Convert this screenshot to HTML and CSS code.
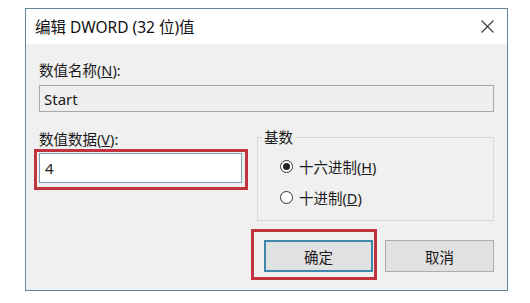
FILE: index.html
```html
<!DOCTYPE html>
<html lang="zh-CN">
<head>
<meta charset="utf-8">
<title>编辑 DWORD (32 位)值</title>
<link rel="stylesheet" href="styles.css">
</head>
<body>
<div class="page">
  <div class="dialog">
    <div class="titlebar">
      <span class="title">编辑 DWORD (32 位)值</span>
      <svg class="close" width="13" height="13" viewBox="0 0 13 13" aria-label="关闭">
        <path d="M0.5 0.5 L12.5 12.5 M12.5 0.5 L0.5 12.5" stroke="#3a3a3a" stroke-width="1.1" fill="none"/>
      </svg>
    </div>
    <div class="content">
      <div class="lbl lbl-name">数值名称(<u>N</u>):</div>
      <div class="field field-readonly">Start</div>
      <div class="row">
        <div class="col-left">
          <div class="lbl">数值数据(<u>V</u>):</div>
          <div class="mark mark-input">
            <div class="field field-edit">4</div>
          </div>
        </div>
        <fieldset class="group">
          <legend class="legend">基数</legend>
          <div class="radio">
            <span class="radio-circle checked"></span>
            <span class="radio-text">十六进制(<u>H</u>)</span>
          </div>
          <div class="radio">
            <span class="radio-circle"></span>
            <span class="radio-text">十进制(<u>D</u>)</span>
          </div>
        </fieldset>
      </div>
      <div class="buttons">
        <div class="mark mark-btn">
          <div class="btn btn-default">确定</div>
        </div>
        <div class="btn btn-cancel">取消</div>
      </div>
    </div>
  </div>
</div>
</body>
</html>
```

FILE: styles.css
```css
html, body {
  margin: 0;
  padding: 0;
  background: #ffffff;
}

body {
  font-family: "Noto Sans", "Noto Sans CJK SC", sans-serif;
  font-size: 14.5px;
  color: #1a1a1a;
}

.page {
  padding: 8px 0 0 25px;
}

.dialog {
  box-sizing: border-box;
  width: 483px;
  height: 283px;
  border: 1px solid #5f8798;
  background: #f0f0f0;
  display: flex;
  flex-direction: column;
}

.titlebar {
  height: 35px;
  flex: none;
  background: #ffffff;
  display: flex;
  align-items: center;
  justify-content: space-between;
  padding: 0 13px 0 9px;
}

.title {
  font-size: 15.5px;
  color: #111;
}

.close {
  display: block;
}

.content {
  flex: 1;
  padding: 16px 13px 0 13px;
  display: flex;
  flex-direction: column;
}

.lbl {
  line-height: 20px;
  height: 20px;
  white-space: nowrap;
}

.lbl-name {
  margin-bottom: 5px;
}

.field {
  box-sizing: border-box;
  display: flex;
  align-items: center;
  padding-left: 4px;
  font-size: 15px;
  white-space: nowrap;
}

.field-readonly {
  height: 27px;
  border: 1px solid #a8a8a8;
  background: #efefef;
  margin-bottom: 17px;
}

.field-edit {
  height: 30px;
  width: 203px;
  border: 1px solid #7d9db3;
  background: #ffffff;
  padding-left: 5px;
}

.row {
  display: flex;
  align-items: flex-start;
}

.col-left {
  width: 214px;
  flex: none;
}

.mark {
  border: 3px solid #c1343f;
}

.mark-input {
  box-sizing: border-box;
  width: 214px;
  margin-left: -5px;
  padding: 1px 3px 4px 2px;
}

.group {
  box-sizing: border-box;
  flex: 1;
  margin: -1px 0 0 4px;
  padding: 10px 0 0 22px;
  height: 93px;
  border: 1px solid #d8d8d8;
  border-radius: 0;
}

.legend {
  padding: 0 2px;
  margin-left: -18px;
  line-height: 18px;
}

.radio {
  display: flex;
  align-items: center;
  height: 20px;
  margin-bottom: 11px;
  white-space: nowrap;
}

.radio-circle {
  box-sizing: border-box;
  width: 13px;
  height: 13px;
  border: 1px solid #333333;
  border-radius: 50%;
  background: #ffffff;
  margin-right: 6px;
  display: flex;
  align-items: center;
  justify-content: center;
  flex: none;
}

.radio-circle.checked::after {
  content: "";
  width: 7px;
  height: 7px;
  border-radius: 50%;
  background: #222222;
}

.buttons {
  margin-top: 8px;
  display: flex;
  justify-content: flex-end;
  align-items: flex-start;
  gap: 8px;
}

.mark-btn {
  padding: 8px 1px 5px 10px;
}

.btn {
  box-sizing: border-box;
  width: 109px;
  height: 32px;
  background: #e1e1e1;
  border: 1px solid #adadad;
  display: flex;
  align-items: center;
  justify-content: center;
  font-size: 14.5px;
  color: #1a1a1a;
}

.btn-cancel {
  margin-top: 11px;
}

.btn-default {
  border: 2px solid #3f88ad;
}
```
